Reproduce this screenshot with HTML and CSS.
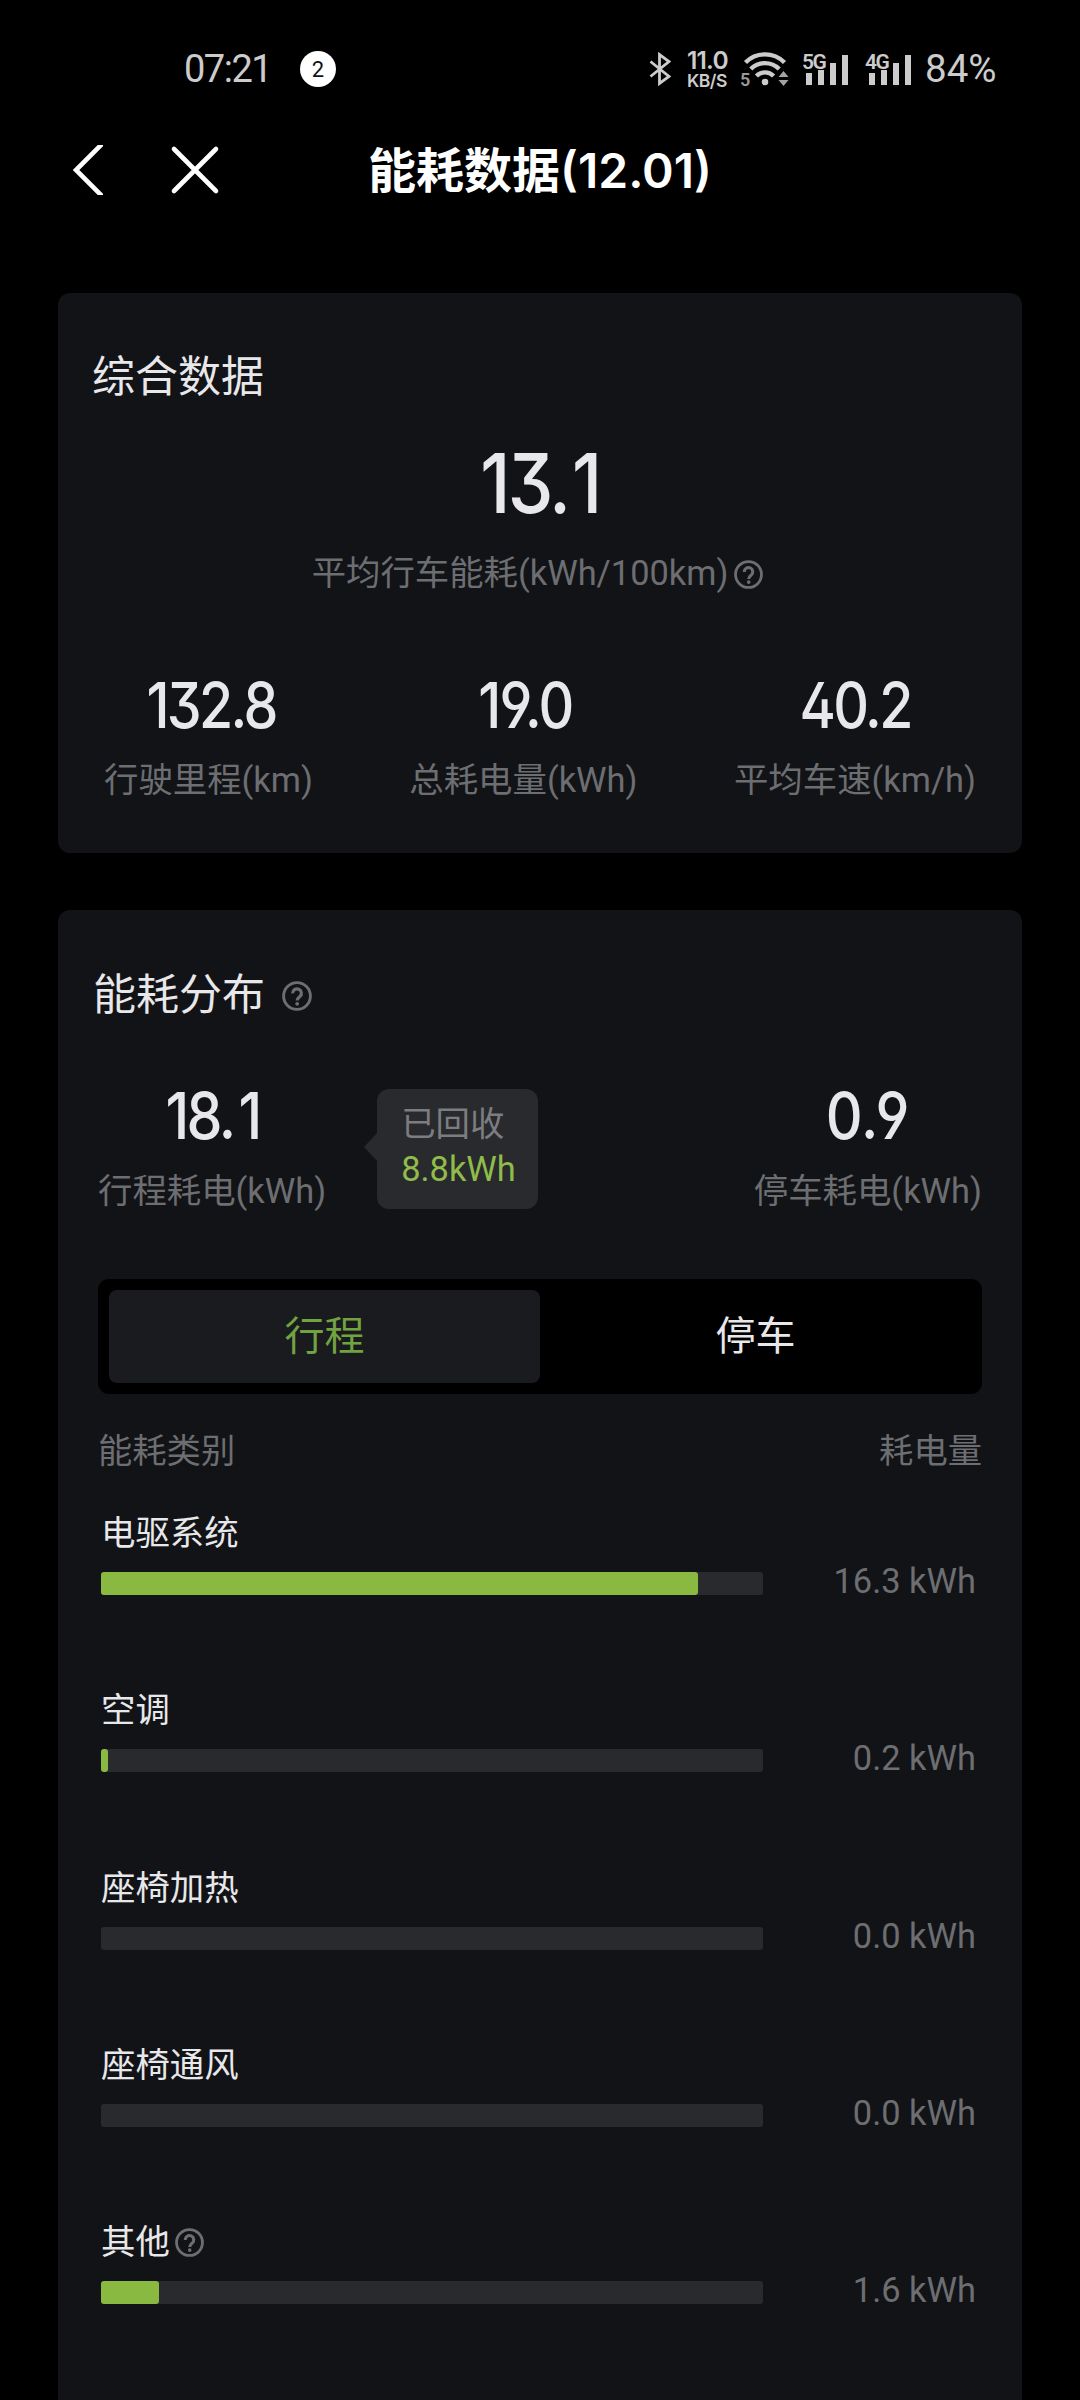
FILE: index.html
```html
<!DOCTYPE html>
<html lang="zh-CN">
<head>
<meta charset="utf-8">
<title>能耗数据</title>
<link rel="stylesheet" href="styles.css">
</head>
<body>
<svg class="defs" width="0" height="0">
  <symbol id="help" viewBox="0 0 30 30">
    <circle cx="15" cy="15" r="13.400" fill="none" stroke="currentColor" stroke-width="2.900"/>
    <path d="M10.600 12.400a4.400 4.400 0 1 1 7.200 3.200c-1.700 1.400-2.600 1.900-2.600 4" fill="none" stroke="currentColor" stroke-width="3.200"/>
    <circle cx="15.200" cy="22.800" r="1.900" fill="currentColor"/>
  </symbol>
</svg>
<header class="status">
  <span class="time">07:21</span>
  <span class="count">2</span>
  <div class="tray">
    <svg class="bt" viewBox="0 0 22 34"><path d="M1.500 9.500 20 24.500 10.500 31.500V2.500L20 9.500 1.500 24.500" fill="none" stroke="currentColor" stroke-width="2.800"/></svg>
    <div class="speed"><b>11.0</b><i>KB/S</i></div>
    <svg class="wifi" viewBox="0 0 48 38">
      <g fill="none" stroke="currentColor" stroke-width="4.400">
        <path d="M3.500 12.500a27.500 27.500 0 0 1 39 0"/>
        <path d="M8.800 19a20 20 0 0 1 28.400 0"/>
        <path d="M14.400 26a12 12 0 0 1 17.200 0"/>
      </g>
      <circle cx="23" cy="32" r="3.300" fill="currentColor"/>
      <path d="m41.500 21 5 6h-10zM36.500 30h10l-5 6z" fill="currentColor" opacity=".8"/>
      <text x="-2" y="35.500" class="band">5</text>
    </svg>
    <svg class="signal" viewBox="0 0 47 34"><text x="0" y="16.500" class="net">5G</text><path d="M4 21h6v12H4zM16 18h6v15h-6zM28 11h6v22h-6zM40 3h6v30h-6z" fill="currentColor"/></svg>
    <svg class="signal second" viewBox="0 0 47 34"><text x="0" y="16.500" class="net">4G</text><path d="M4 21h6v12H4zM16 18h6v15h-6zM28 11h6v22h-6zM40 3h6v30h-6z" fill="currentColor"/></svg>
    <span class="battery">84%</span>
  </div>
</header>
<nav class="nav">
  <svg class="back" viewBox="0 0 30 50"><path d="M29 -1 3 25l26 26" fill="none" stroke="currentColor" stroke-width="4.600"/></svg>
  <svg class="close" viewBox="0 0 46 46"><path d="m2 2 42 42M44 2 2 44" fill="none" stroke="currentColor" stroke-width="4.600" stroke-linecap="round"/></svg>
  <h1>能耗数据<span>(12.01)</span></h1>
</nav>
<main>
  <section class="card summary">
    <h2>综合数据</h2>
    <div class="hero"><span class="num big">13.<em>1</em></span>
      <div class="label">平均行车能耗(kWh/100km)<svg class="help"><use href="#help"/></svg></div>
    </div>
    <div class="stats">
      <div class="stat"><span class="num mileage">132.8</span><span class="label">行驶里程(km)</span></div>
      <div class="stat"><span class="num total">19.0</span><span class="label">总耗电量(kWh)</span></div>
      <div class="stat"><span class="num">40.2</span><span class="label">平均车速(km/h)</span></div>
    </div>
  </section>
  <section class="card dist">
    <h2>能耗分布<svg class="help"><use href="#help"/></svg></h2>
    <div class="split">
      <div class="stat"><span class="num trip">18.<em>1</em></span><span class="label">行程耗电(kWh)</span></div>
      <div class="tip"><span>已回收</span><strong>8.8kWh</strong></div>
      <div class="stat end"><span class="num parked">0.9</span><span class="label">停车耗电(kWh)</span></div>
    </div>
    <div class="tabs"><div class="tab on">行程</div><div class="tab">停车</div></div>
    <div class="thead"><span>能耗类别</span><span>耗电量</span></div>
    <div class="row"><span class="name">电驱系统</span><div class="track"><div class="fill" style="width:597px"></div></div><span class="val">16.3 kWh</span></div>
    <div class="row"><span class="name">空调</span><div class="track"><div class="fill" style="width:7px"></div></div><span class="val">0.2 kWh</span></div>
    <div class="row"><span class="name">座椅加热</span><div class="track"></div><span class="val">0.0 kWh</span></div>
    <div class="row"><span class="name">座椅通风</span><div class="track"></div><span class="val">0.0 kWh</span></div>
    <div class="row"><span class="name">其他<svg class="help"><use href="#help"/></svg></span><div class="track"><div class="fill" style="width:58px"></div></div><span class="val">1.6 kWh</span></div>
  </section>
</main>
</body>
</html>
```
FILE: styles.css
```css
* { box-sizing: border-box; margin: 0; padding: 0; }
html { background: #000; }
body {
  width: 1080px; height: 2400px; overflow: hidden;
  background: #000; color: #e8e8ea;
  font-family: Roboto, "Noto Sans CJK SC", sans-serif;
}
svg { display: block; flex: none; overflow: visible; }
.defs { position: absolute; }
em, i { font-style: normal; }

.status {
  height: 137px; padding: 0 81px 0 184px;
  display: flex; align-items: center; color: #ccc;
}
.time { font-size: 38px; letter-spacing: -1.500px; width: 116px; line-height: 44px; margin-top: 1px; }
.count {
  width: 36px; height: 36px; border-radius: 50%; background: #fff; color: #111;
  font-size: 22px; line-height: 37px; text-align: center;
}
.tray { margin-left: auto; display: flex; align-items: center; }
.bt { width: 22px; height: 34px; }
.speed { margin-left: 16px; width: 45px; display: flex; flex-direction: column; font-family: Inter, sans-serif; }
.speed b { font-size: 24.500px; line-height: 24px; font-weight: 600; letter-spacing: -0.800px; }
.speed i { font-size: 17.500px; line-height: 18px; font-weight: 600; letter-spacing: -0.500px; }
.wifi { width: 48px; height: 38px; margin-left: 10px; margin-right: 12px; }
.band { font: 600 18px Roboto, sans-serif; fill: #999; }
.net { font: 600 21px Roboto, sans-serif; fill: #ccc; letter-spacing: -1.500px; }
.signal { width: 47px; height: 34px; }
.second { margin-left: 16px; }
.battery { width: 74px; font-size: 38.500px; margin-left: 13px; line-height: 44px; margin-top: 1px; white-space: nowrap; }

.nav {
  height: 66px; display: grid; grid-template-columns: 99px 200px 1fr;
  align-items: center; padding-left: 73px; color: #fff; position: relative;
}
.back { width: 30px; height: 50px; overflow: hidden; }
.close { width: 46px; height: 46px; }
h1 {
  position: absolute; left: 0; right: 0; top: 1px; text-align: center;
  font-size: 48px; line-height: 66px; font-weight: 700;
}
h1 span { font-family: Inter, sans-serif; font-weight: 600; }

main { padding: 90px 58px 0; display: flex; flex-direction: column; gap: 57px; }
.card { background: #121317; border-radius: 12px; }
.summary { height: 560px; padding: 54px 46px 0; }
.dist { height: 1520px; padding: 55px 40px 0; }
h2 { font-size: 43px; line-height: 60px; font-weight: 400; display: flex; align-items: center; }
.summary h2 { margin-left: -12px; }
.label { font-size: 34.400px; line-height: 48px; color: #6d6e71; white-space: nowrap; display: flex; align-items: center; }
.help { width: 29px; height: 29px; color: #6d6e71; }
.num {
  font-family: Inter, sans-serif; font-feature-settings: "cv09", "cv04", "cv02";
  font-weight: 500; letter-spacing: -3px; white-space: nowrap; transform: scaleX(0.88);
}

.hero { display: flex; flex-direction: column; align-items: center; margin-top: 26px; }
.big { font-size: 82.500px; line-height: 100px; }
.big em { margin-left: 4px; }
.hero .label { margin-top: 16px; margin-right: 5px; }
.hero .help { margin: 3px 0 0 6px; }
.stats { display: flex; justify-content: space-between; margin-top: 71px; }
.stat { display: flex; flex-direction: column; align-items: center; }
.stat .num { font-size: 63px; line-height: 74px; }
.stat .label { margin-top: 14px; }
.mileage { padding-left: 6px; }
.stat .total { padding-left: 4px; letter-spacing: -2px; }
.stat .parked { letter-spacing: 0; }
.trip em { margin-left: 6px; }

.dist h2 { margin-left: -5px; }
.dist h2 .help { width: 30px; height: 30px; margin: 1px 0 0 17px; }
.split { display: flex; align-items: flex-start; margin-top: 54px; }
.split .num { font-size: 65px; }
.tip {
  position: relative; width: 161px; height: 120px; margin: 10px 0 0 51px; padding: 13px 0 0 24px;
  background: #292a2d; border-radius: 12px; display: flex; flex-direction: column;
  font-size: 34.400px; line-height: 45px; color: #7c7d80;
}
.tip::before {
  content: ""; position: absolute; left: -13px; top: 44px;
  border: solid transparent; border-width: 14px 13px 14px 0; border-right-color: #292a2d;
}
.tip strong { font-weight: 400; color: #8fbc4a; }
.end { margin-left: auto; }
.tabs { display: grid; grid-template-columns: 1fr 1fr; height: 115px; margin-top: 64px; padding: 11px; background: #000; border-radius: 11px; }
.tab { font-size: 40px; line-height: 94px; height: 93px; text-align: center; border-radius: 8px; }
.on { background: #1a1b1f; color: #72a341; }
.thead { display: flex; justify-content: space-between; margin: 33px 0 39px; font-size: 34.300px; line-height: 48px; color: #6d6e71; }
.row {
  display: grid; grid-template-columns: 662px 1fr; grid-template-rows: 58px 23px;
  height: 177.300px; padding: 0 6px 0 3px; font-size: 34.400px;
}
.name { grid-column: 1 / 3; line-height: 38px; display: flex; align-items: center; height: 38px; }
.name .help { margin: 1px 0 0 5px; }
.track { height: 23px; background: #292a2d; border-radius: 3px; }
.fill { height: 23px; background: #8ab942; border-radius: 3px; }
.val { text-align: right; line-height: 19px; color: #6d6e71; }
```
